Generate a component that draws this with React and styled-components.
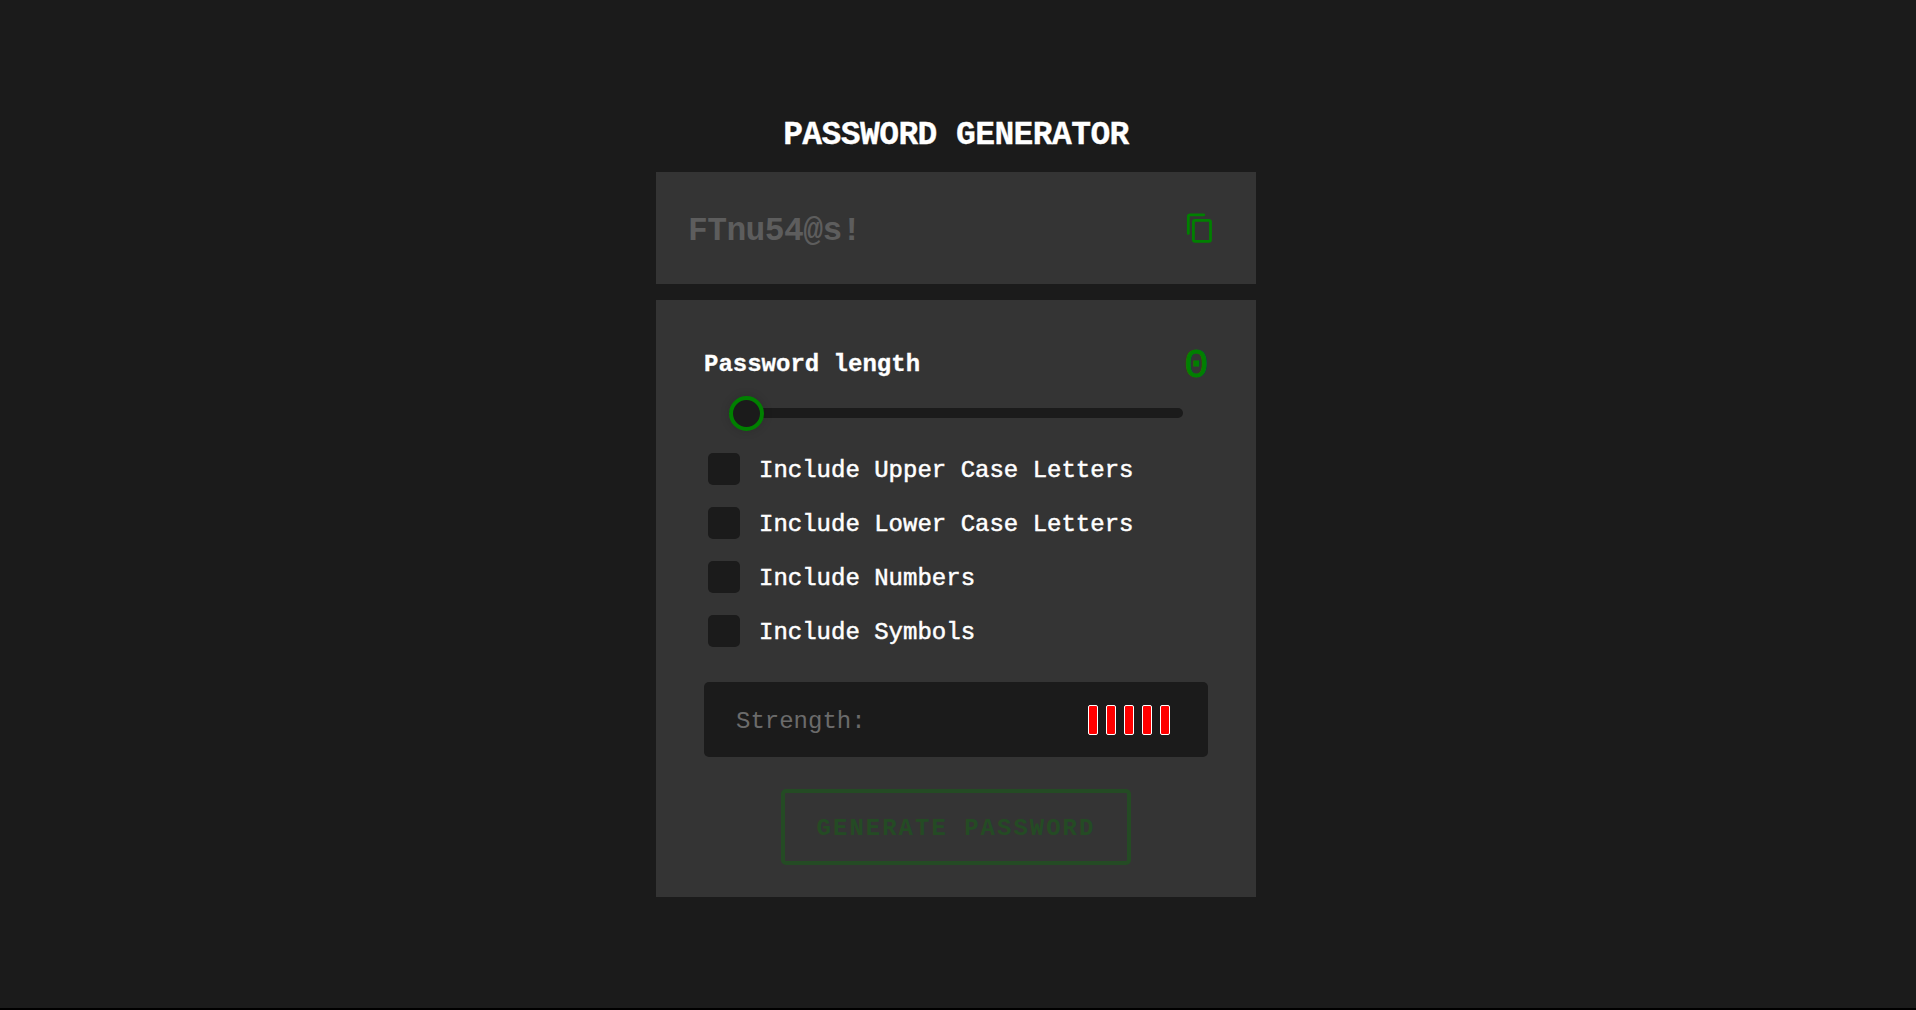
import React, { useState } from "react";
import styled, { createGlobalStyle } from "styled-components";

const GlobalStyle = createGlobalStyle`
  *, *::before, *::after { box-sizing: border-box; }
  body {
    margin: 0;
    background: #1b1b1b;
    color: #fff;
    font-family: "Liberation Mono", "DejaVu Sans Mono", monospace;
    font-size: 24px;
  }
`;

const Page = styled.main`
  display: flex;
  flex-direction: column;
  align-items: center;
  height: 1010px;
  padding: 115px 4px 0 0;
  border-bottom: 2px solid #000;
`;

const Container = styled.div`
  display: flex;
  flex-direction: column;
  width: 600px;
`;

const Title = styled.h1`
  margin: 0 0 15px;
  font-size: 33px;
  letter-spacing: -0.6px;
  line-height: 42px;
  font-weight: 700;
  text-align: center;
  text-transform: uppercase;
  -webkit-text-stroke: 0.3px #fff;
`;

const Display = styled.section`
  display: flex;
  align-items: center;
  justify-content: space-between;
  height: 112px;
  padding: 0 40px 0 32px;
  margin-bottom: 16px;
  background: #343434;
`;

const Password = styled.span`
  padding-top: 7px;
  font-size: 33px;
  letter-spacing: -0.6px;
  line-height: 42px;
  font-weight: 700;
  color: #5d5d5d;
`;

const CopyButton = styled.button`
  display: flex;
  width: 32px;
  height: 32px;
  padding: 0;
  border: 0;
  background: none;
  color: #008000;
`;

const Panel = styled.section`
  display: flex;
  flex-direction: column;
  height: 597px;
  padding: 38px 48px 32px;
  background: #343434;
`;

const LengthRow = styled.div`
  display: flex;
  align-items: center;
  justify-content: space-between;
  height: 52px;
`;

const LengthLabel = styled.span`
  font-weight: 700;
  -webkit-text-stroke: 0.3px #fff;
`;

const LengthValue = styled.span`
  padding-top: 4px;
  font-size: 41px;
  letter-spacing: -0.6px;
  color: #008000;
  -webkit-text-stroke: 1px #008000;
`;

const Slider = styled.input`
  appearance: none;
  width: 454px;
  height: 10px;
  margin: 18px auto 35px;
  border-radius: 5px;
  background: #1b1b1b;
  outline: none;

  &::-webkit-slider-thumb {
    appearance: none;
    width: 35px;
    height: 35px;
    border: 4px solid #008000;
    border-radius: 50%;
    background: #1b1b1b;
    box-shadow: 0 0 10px rgba(0, 0, 0, 0.15);
  }
`;

const Options = styled.div`
  display: flex;
  flex-direction: column;
  gap: 22px;
  padding-left: 4px;
`;

const Option = styled.label`
  display: flex;
  align-items: center;
  gap: 19px;
  height: 32px;
  -webkit-text-stroke: 0.5px #fff;
`;

const OptionText = styled.span`
  padding-top: 2px;
`;

const Checkbox = styled.input`
  appearance: none;
  width: 32px;
  height: 32px;
  margin: 0;
  border-radius: 5px;
  background: #1b1b1b;

  &:checked { background: #008000; }
`;

const Strength = styled.div`
  display: flex;
  align-items: center;
  justify-content: space-between;
  height: 75px;
  margin-top: 35px;
  padding: 0 38px 0 32px;
  border-radius: 5px;
  background: #1b1b1b;
  color: #6b6b6b;
`;

const StrengthLabel = styled.span`
  padding-top: 4px;
`;

const Bars = styled.div`
  display: flex;
  gap: 8px;
`;

const Bar = styled.span`
  width: 10px;
  height: 30px;
  border: 1px solid #fff;
  border-radius: 2px;
  background: #f00;
`;

const GenerateButton = styled.button`
  align-self: center;
  width: 350px;
  height: 76px;
  margin-top: 32px;
  padding: 2px 0 0;
  border: 4px solid #008000;
  border-radius: 5px;
  background: none;
  color: #008000;
  font: inherit;
  font-weight: 700;
  letter-spacing: 2px;
  text-transform: uppercase;
  opacity: 0.3;
`;

const options = [
  "Include Upper Case Letters",
  "Include Lower Case Letters",
  "Include Numbers",
  "Include Symbols",
];

function CopyIcon() {
  return (
    <svg width="32" height="32" viewBox="0 0 32 32" fill="none" stroke="currentColor" strokeWidth="2.8" strokeLinecap="round">
      <path d="M4.3 21.4V4.6q0-1.8 1.8-1.8H19.8" />
      <rect x="9.4" y="8.4" width="17.1" height="20.9" rx="1.6" />
    </svg>
  );
}

export default function App() {
  const [length, setLength] = useState(0);
  return (
    <>
      <GlobalStyle />
      <Page>
        <Container>
          <Title>Password Generator</Title>
          <Display>
            <Password>FTnu54@s!</Password>
            <CopyButton aria-label="Copy"><CopyIcon /></CopyButton>
          </Display>
          <Panel>
            <LengthRow>
              <LengthLabel>Password length</LengthLabel>
              <LengthValue>{length}</LengthValue>
            </LengthRow>
            <Slider type="range" min="0" max="20" value={length} onChange={(e) => setLength(Number(e.target.value))} />
            <Options>
              {options.map((text) => (
                <Option key={text}>
                  <Checkbox type="checkbox" />
                  <OptionText>{text}</OptionText>
                </Option>
              ))}
            </Options>
            <Strength>
              <StrengthLabel>Strength:</StrengthLabel>
              <Bars>
                {[0, 1, 2, 3, 4].map((n) => <Bar key={n} />)}
              </Bars>
            </Strength>
            <GenerateButton disabled={length === 0}>Generate Password</GenerateButton>
          </Panel>
        </Container>
      </Page>
    </>
  );
}
